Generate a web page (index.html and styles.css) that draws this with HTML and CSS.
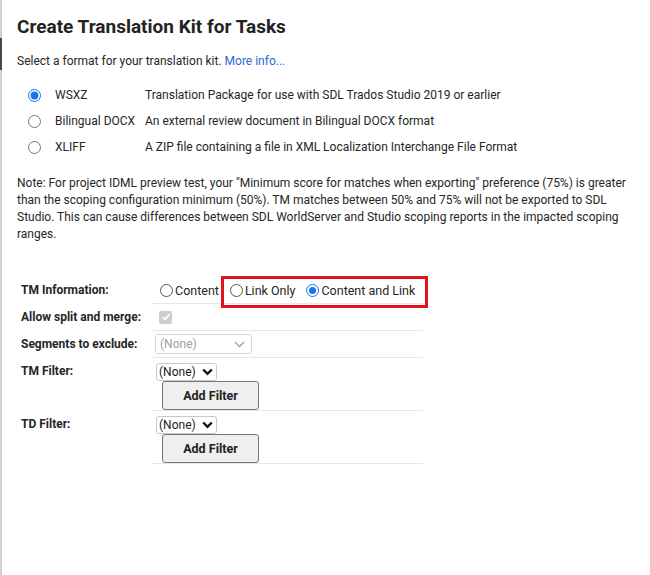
FILE: index.html
```html
<!DOCTYPE html>
<html>
<head>
<meta charset="utf-8">
<link rel="stylesheet" href="styles.css">
</head>
<body>
<div class="edge"><div class="edge-mark"></div></div>
<div class="page">
  <h1 class="title">Create Translation Kit for Tasks</h1>
  <p class="intro">Select a format for your translation kit. <a class="link" href="#">More info...</a></p>
  <div class="formats">
    <label class="fmt"><input type="radio" name="fmt" checked><span class="fmt-name">WSXZ</span><span class="fmt-desc">Translation Package for use with SDL Trados Studio 2019 or earlier</span></label>
    <label class="fmt"><input type="radio" name="fmt"><span class="fmt-name">Bilingual DOCX</span><span class="fmt-desc">An external review document in Bilingual DOCX format</span></label>
    <label class="fmt"><input type="radio" name="fmt"><span class="fmt-name">XLIFF</span><span class="fmt-desc">A ZIP file containing a file in XML Localization Interchange File Format</span></label>
  </div>
  <p class="note">Note: For project IDML preview test, your "Minimum score for matches when exporting" preference (75%) is greater than the scoping configuration minimum (50%). TM matches between 50% and 75% will not be exported to SDL Studio. This can cause differences between SDL WorldServer and Studio scoping reports in the impacted scoping ranges.</p>

  <div class="form">
    <div class="row">
      <div class="label">TM Information:</div>
      <div class="value tm-info">
        <label class="opt"><span class="radio"></span>Content</label>
        <label class="opt"><span class="radio"></span>Link Only</label>
        <label class="opt"><span class="radio on"></span>Content and Link</label>
      </div>
      <div class="highlight"></div>
    </div>
    <div class="row">
      <div class="label">Allow split and merge:</div>
      <div class="value"><span class="check"><svg width="10" height="10" viewBox="0 0 10 10"><path d="M1.5 5.2 L4 7.6 L8.6 2.4" fill="none" stroke="#fff" stroke-width="1.6"/></svg></span></div>
    </div>
    <div class="row">
      <div class="label">Segments to exclude:</div>
      <div class="value"><span class="select disabled wide"><span>(None)</span><svg width="11" height="7" viewBox="0 0 11 7"><path d="M1 1 L5.5 5.5 L10 1" fill="none" stroke="#aaa" stroke-width="1.6"/></svg></span></div>
    </div>
    <div class="row">
      <div class="label">TM Filter:</div>
      <div class="value stack">
        <span class="select"><span>(None)</span><svg width="11" height="8" viewBox="0 0 11 8"><path d="M1.2 1.5 L5.5 5.8 L9.8 1.5" fill="none" stroke="#111" stroke-width="2.4"/></svg></span>
        <button class="btn">Add Filter</button>
      </div>
    </div>
    <div class="row">
      <div class="label">TD Filter:</div>
      <div class="value stack">
        <span class="select"><span>(None)</span><svg width="11" height="8" viewBox="0 0 11 8"><path d="M1.2 1.5 L5.5 5.8 L9.8 1.5" fill="none" stroke="#111" stroke-width="2.4"/></svg></span>
        <button class="btn">Add Filter</button>
      </div>
    </div>
  </div>
</div>
</body>
</html>
```
FILE: styles.css
```css
html, body {
  margin: 0;
  padding: 0;
  background: #fff;
}
body {
  font-family: Roboto, "Open Sans", sans-serif;
  font-size: 12px;
  color: #262626;
  position: relative;
  min-height: 575px;
}
.edge {
  position: absolute;
  left: 0;
  top: 0;
  bottom: 0;
  width: 2px;
  background: #cfcfcf;
}
.edge-mark {
  margin-top: 38px;
  height: 32px;
  background: #4a4a4a;
}
.page {
  padding: 14px 0 0 17px;
}
.title {
  margin: 0;
  font-size: 19px;
  font-weight: 700;
  line-height: 26px;
  color: #222;
}
.intro {
  margin: 12px 0 0;
  line-height: 18px;
}
.link {
  color: #2a6acf;
  text-decoration: none;
}
.formats {
  margin-top: 12px;
  display: flex;
  flex-direction: column;
}
.fmt {
  display: flex;
  align-items: center;
  height: 26px;
}
.fmt input {
  margin: 0 0 0 11px;
  width: 13px;
  height: 13px;
  accent-color: #1a73e8;
}
.fmt-name {
  margin-left: 14px;
  width: 90px;
}
.note {
  margin: 15px 0 0;
  width: 620px;
  line-height: 17px;
}
.form {
  margin-top: 34px;
}
.row {
  display: flex;
  position: relative;
}
.label {
  width: 131px;
  padding-left: 4px;
  font-weight: 700;
  line-height: 27px;
  white-space: nowrap;
}
.value {
  width: 271px;
  min-height: 26px;
  border-bottom: 1px solid #e8e8e8;
  display: flex;
  align-items: center;
}
.tm-info {
  padding-left: 8px;
  width: 263px;
  white-space: nowrap;
  font-size: 12.5px;
}
.opt {
  display: flex;
  align-items: center;
  margin-right: 11px;
}
.radio {
  width: 11px;
  height: 11px;
  border: 1px solid #555;
  border-radius: 50%;
  margin-right: 2px;
  box-sizing: content-box;
  background: #fff;
  position: relative;
}
.radio.on {
  border-color: #1a73e8;
}
.radio.on::after {
  content: "";
  position: absolute;
  left: 2px;
  top: 2px;
  width: 7px;
  height: 7px;
  border-radius: 50%;
  background: #1a73e8;
}
.highlight {
  position: absolute;
  left: 204px;
  top: -1px;
  width: 201px;
  height: 26px;
  border: 3px solid #e0141e;
}
.check {
  margin-left: 7px;
  width: 13px;
  height: 13px;
  border-radius: 2px;
  background: #cdcdcd;
  display: flex;
  align-items: center;
  justify-content: center;
}
.select {
  display: inline-flex;
  align-items: center;
  justify-content: space-between;
  gap: 6px;
  height: 18px;
  padding: 0 3px 0 2px;
  border: 1px solid #c8c8c8;
  border-radius: 3px;
  color: #1a1a1a;
  box-sizing: border-box;
}
.select.disabled {
  color: #a0a0a0;
  border-color: #d6d6d6;
  height: 20px;
  padding: 0 6px 0 4px;
}
.wide {
  width: 97px;
  margin-left: 3px;
}
.stack {
  flex-direction: column;
  align-items: flex-start;
  padding: 5px 0 0 4px;
  width: 267px;
}
.btn {
  margin-left: 6px;
  width: 97px;
  height: 29px;
  font-family: inherit;
  font-size: 12.5px;
  font-weight: 700;
  color: #222;
  background: #efefef;
  border: 1px solid #767676;
  border-radius: 3px;
  padding: 0;
}
```
